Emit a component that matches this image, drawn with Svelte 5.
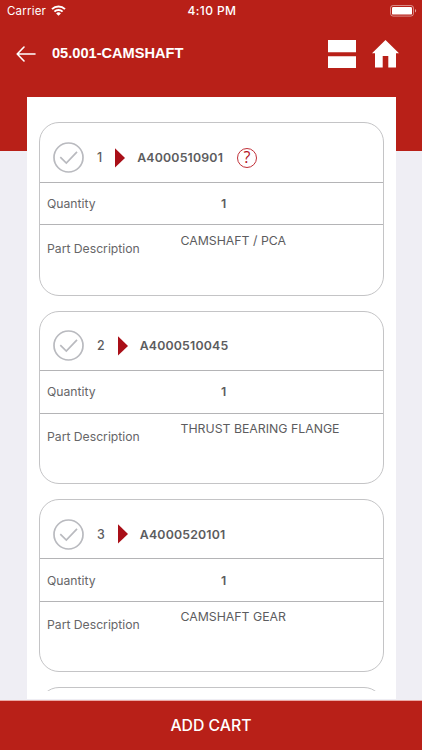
<!--
  Parts list screen: pick the parts of an assembly and add them to the cart.
 -->
<script>
  let parts = $state([
    { number: 'A4000510901', quantity: 1, description: 'CAMSHAFT / PCA', help: true, picked: false },
    { number: 'A4000510045', quantity: 1, description: 'THRUST BEARING FLANGE', picked: false },
    { number: 'A4000520101', quantity: 1, description: 'CAMSHAFT GEAR', picked: false }
  ]);
</script>

<div class="screen">
  <header>
    <div class="status">
      <div class="carrier">
        <span>Carrier</span>
        <svg width="15" height="11" viewBox="0 0 15 11" fill="none" stroke="#fff" stroke-width="2">
          <path d="M1 4.1a9.3 9.3 0 0 1 13 0M3.4 6.6a5.9 5.9 0 0 1 8.2 0" />
          <path d="M7.5 10.8L5.1 8.4a3.4 3.4 0 0 1 4.8 0z" fill="#fff" stroke="none" />
        </svg>
      </div>
      <span class="time">4:10 PM</span>
      <svg class="battery" width="27" height="12" viewBox="0 0 27 12">
        <rect x="0.5" y="0.5" width="23" height="10.6" rx="2.6" fill="none" stroke="#fff" stroke-opacity="0.6" stroke-width="0.8" />
        <rect x="2" y="2" width="20" height="7.6" rx="1.2" fill="#fff" />
        <path d="M25 4v3.6a2 2 0 0 0 0-3.6z" fill="#fff" fill-opacity="0.6" />
      </svg>
    </div>
    <nav>
      <button class="back" aria-label="Back">
        <svg width="20" height="16" viewBox="0 0 20 16" fill="none" stroke="#fff" stroke-width="1.6" stroke-linecap="round" stroke-linejoin="round">
          <path d="M19 8H1.2M8 1L1.2 8L8 15" />
        </svg>
      </button>
      <h1>05.001-CAMSHAFT</h1>
      <button class="split" aria-label="Split view">
        <svg width="28" height="28" viewBox="0 0 28 28" fill="#fff">
          <path d="M0 0h28v12.2H0zM0 16.2h28V28H0z" />
        </svg>
      </button>
      <button aria-label="Home">
        <svg width="27" height="28" viewBox="0 0 27 28" fill="#fff">
          <path d="M13.5 0L27 13.2H24V27.6H16.3V16H10.7V27.6H3V13.2H0z" />
        </svg>
      </button>
    </nav>
  </header>

  <main>
    <div class="sheet">
      <div class="list">
        {#each parts as part, i}
          <section class="card">
            <div class="row top">
              <button class="check" class:picked={part.picked} aria-label="Select part" onclick={() => part.picked = !part.picked}>
                <svg width="31" height="31" viewBox="0 0 31 31" fill="none" stroke="currentColor">
                  <circle cx="15.5" cy="15.5" r="14.5" stroke-width="1.7" />
                  <path d="M7.3 15.2L13.3 21L24 9.8" stroke-width="1.7" />
                </svg>
              </button>
              <span class="index">{i + 1}</span>
              <svg class="arrow" width="10" height="20" viewBox="0 0 10 20">
                <path d="M0 0.3L10 9.9L0 19.5z" fill="#a90f18" />
              </svg>
              <span class="number">{part.number}</span>
              {#if part.help}
                <button class="help">?</button>
              {/if}
            </div>
            <div class="row quantity">
              <span class="label">Quantity</span>
              <span class="value">{part.quantity}</span>
            </div>
            <div class="row detail">
              <span class="label">Part Description</span>
              <span class="description">{part.description}</span>
            </div>
          </section>
        {/each}
        <!-- Outline of the next card, filled once it is scrolled to -->
        <section class="card"></section>
      </div>
    </div>
  </main>

  <button class="cart">ADD CART</button>
</div>

<style>
  :global(body) {
    margin: 0;
  }

  .screen {
    display: flex;
    flex-direction: column;
    height: 750px;
    overflow: hidden;
    background-color: #efeef4;
    color: #5c5c5e;
    font-family: Inter, "Liberation Sans", sans-serif;
  }

  button {
    display: block;
    padding: 0;
    border: 0;
    background: none;
    color: inherit;
    font-family: inherit;
  }

  svg {
    display: block;
    flex: none;
  }

  header {
    flex: none;
    height: 97px;
    background-color: #b82018;
    color: #fff;
  }

  .status {
    display: grid;
    grid-template-columns: 1fr auto 1fr;
    align-items: center;
    height: 21px;
    padding: 0 5px 0 7px;
    font-size: 12px;
  }

  .carrier {
    display: flex;
    align-items: center;
    gap: 5px;
    font-size: 11.5px;
    letter-spacing: 0.2px;
  }

  .time {
    font-weight: 500;
    letter-spacing: 0.4px;
  }

  .battery {
    justify-self: end;
  }

  nav {
    display: flex;
    align-items: center;
    height: 65px;
    padding: 0 23px 0 16px;
  }

  h1 {
    flex: 1;
    margin: -2px 0 0 16px;
    font-family: "Liberation Sans", sans-serif;
    font-size: 14.6px;
    font-weight: bold;
  }

  .split {
    margin-right: 16px;
  }

  main {
    flex: 1;
    min-height: 0;
    padding: 0 26px 0 27px;
    background: linear-gradient(#b82018 54px, #efeef4 54px);
  }

  .sheet {
    height: 594px;
    padding: 0 12px 8px;
    background-color: #fff;
  }

  .list {
    height: 594px;
    padding-top: 25.4px;
    box-sizing: border-box;
    overflow: hidden;
  }

  .card {
    height: 173.3px;
    margin-bottom: 15px;
    box-sizing: border-box;
    border: 1px solid #c4c4c6;
    border-radius: 20px;
  }

  .row {
    display: flex;
    box-sizing: border-box;
    font-size: 12.4px;
  }

  .top {
    align-items: center;
    height: 59.5px;
    padding: 10px 0 0 13px;
    border-bottom: 1px solid #b4b4b6;
  }

  .check {
    color: #b9babf;
  }

  .check.picked {
    color: #a90f18;
  }

  .index {
    margin: 0 13px;
    font-weight: 500;
  }

  .number {
    margin-left: 12px;
    font-size: 12.3px;
    font-weight: 600;
    letter-spacing: 0.2px;
  }

  .help {
    width: 20px;
    height: 20px;
    margin-left: 14px;
    border: 1px solid #c03038;
    border-radius: 50%;
    color: #b3101b;
    font-family: "Open Sans", sans-serif;
    font-size: 16px;
    line-height: 17px;
  }

  .quantity {
    align-items: center;
    height: 42.5px;
    padding-left: 7px;
    border-bottom: 1px solid #b4b4b6;
  }

  .label {
    width: 133px;
    color: #666668;
    font-size: 12.2px;
  }

  .value {
    margin-left: 41px;
    font-weight: 600;
  }

  .detail {
    padding: 7.5px 0 0 7px;
  }

  .detail .label {
    padding-top: 8px;
  }

  .description {
    margin-left: 0.5px;
    font-size: 12.3px;
  }

  .cart {
    flex: none;
    height: 50px;
    padding-bottom: 1px;
    border-top: 1px solid #eba9a5;
    background-color: #b82018;
    color: #fff;
    font-size: 15.8px;
    font-weight: 500;
  }
</style>
